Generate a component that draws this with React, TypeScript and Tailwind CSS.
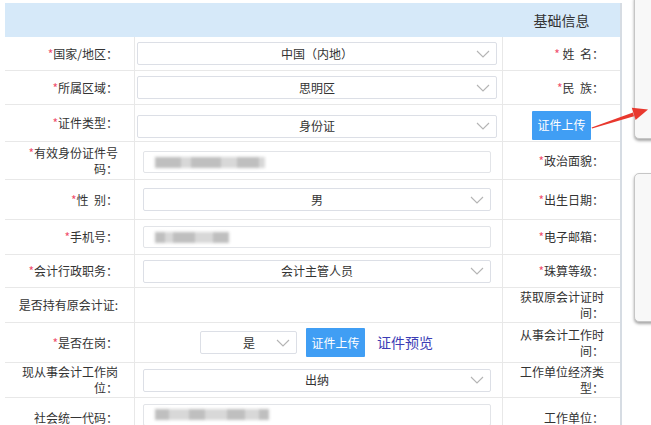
import React from "react";

const Chevron = () => (
  <svg width="14" height="8" viewBox="0 0 14 8" className="absolute right-[6px] top-1/2 -translate-y-1/2">
    <polyline points="1,1 7,7 13,1" fill="none" stroke="#b4b4b4" strokeWidth="1.1" />
  </svg>
);

const Req = () => <span className="text-[#f0506e]">*</span>;

const Select = ({ value, cls }: { value: string; cls: string }) => (
  <div className={`relative h-[23px] border border-[#dcdfe6] rounded-[2px] bg-white flex items-center justify-center text-[12px] text-[#333] ${cls}`}>
    <span>{value}</span>
    <Chevron />
  </div>
);

const Blur = ({ widths }: { widths: number[] }) => (
  <div className="flex items-center h-full pl-[11px] blur-[1.5px]">
    {widths.map((w, i) => (
      <div key={i} style={{ width: w, opacity: i % 2 ? 0.55 : 0.9 }} className="h-[11px] bg-[#b8b8b8]" />
    ))}
  </div>
);

const Input = ({ widths }: { widths?: number[] }) => (
  <div className="h-[22px] border border-[#e2e4e8] rounded-[2px] bg-white ml-[8px] mr-[11px]">
    {widths && <Blur widths={widths} />}
  </div>
);

const Btn = () => (
  <div className="w-[59px] h-[29px] bg-[#409ef4] text-white text-[12px] flex items-center justify-center rounded-[1px]">证件上传</div>
);

type RowProps = { h: string; left: React.ReactNode; mid?: React.ReactNode; right: React.ReactNode; rightNode?: boolean };

const Row = ({ h, left, mid, right, rightNode }: RowProps) => (
  <div className={`grid grid-cols-[130px_368px_117px] border-b border-[#e8e8e8] ${h}`}>
    <div className="flex items-center justify-end text-right pl-[12px] pr-[16px] border-r border-[#e8e8e8] text-[12px] leading-[16px] text-[#333]">
      <div>{left}</div>
    </div>
    <div className="flex flex-col justify-center border-r border-[#e8e8e8]">{mid}</div>
    {rightNode ? (
      <div className="flex items-center justify-center">{right}</div>
    ) : (
      <div className="flex items-center justify-end text-right pl-[17px] pr-[16px] text-[12px] leading-[16px] text-[#333]">
        <div>{right}</div>
      </div>
    )}
  </div>
);

export default function App() {
  return (
    <div
      className="relative w-[651px] h-[425px] overflow-hidden bg-white flex"
      style={{ fontFamily: '"Noto Sans CJK SC", "Noto Sans", sans-serif' }}
    >
      <div className="pl-[5px] pt-[3px] shrink-0">
        <div className="w-[617px] border-r-2 border-[#d6dce3]">
          <div className="h-[34px] bg-[#d6e9f9] flex">
            <div className="w-[498px]" />
            <div className="w-[117px] flex items-center justify-center text-[14px] text-[#333]">基础信息</div>
          </div>
          <Row h="h-[34px]" left={<><Req />国家/地区：</>} mid={<Select value="中国（内地）" cls="ml-[2px] mr-[5px]" />} right={<><Req /> 姓&nbsp;&nbsp;名：</>} />
          <Row h="h-[34px]" left={<><Req />所属区域：</>} mid={<Select value="思明区" cls="ml-[2px] mr-[5px]" />} right={<><Req />民&nbsp;&nbsp;族：</>} />
          <Row
            h="h-[37px]"
            left={<><Req />证件类型：</>}
            mid={<div className="pt-[6px]"><Select value="身份证" cls="ml-[2px] mr-[5px]" /></div>}
            right={<div className="pt-[4px]"><Btn /></div>}
            rightNode
          />
          <Row
            h="h-[38px]"
            left={<><Req />有效身份证件号码：</>}
            mid={<div className="pt-[3px]"><Input widths={[26, 10, 30, 16, 22, 6]} /></div>}
            right={<><Req />政治面貌：</>}
          />
          <Row h="h-[40px]" left={<><Req />性&nbsp;&nbsp;别：</>} mid={<Select value="男" cls="ml-[8px] mr-[11px]" />} right={<><Req />出生日期：</>} />
          <Row h="h-[35px]" left={<><Req />手机号：</>} mid={<Input widths={[10, 8, 22, 18, 16]} />} right={<><Req />电子邮箱：</>} />
          <Row h="h-[33px]" left={<><Req />会计行政职务：</>} mid={<Select value="会计主管人员" cls="ml-[8px] mr-[11px]" />} right={<><Req />珠算等级：</>} />
          <Row h="h-[35px]" left={<>是否持有原会计证:</>} mid={null} right={<>获取原会计证时间：</>} />
          <Row
            h="h-[40px]"
            left={<><Req />是否在岗：</>}
            mid={
              <div className="flex items-center pl-[65px]">
                <div className="relative w-[97px] h-[23px] border border-[#dcdfe6] rounded-[2px] flex items-center text-[12px] text-[#333]">
                  <span className="ml-[42px]">是</span>
                  <Chevron />
                </div>
                <div className="ml-[9px]"><Btn /></div>
                <span className="ml-[12px] text-[14px] text-[#3c3cb5]">证件预览</span>
              </div>
            }
            right={<>从事会计工作时间：</>}
          />
          <Row h="h-[35px]" left={<>现从事会计工作岗位：</>} mid={<Select value="出纳" cls="ml-[8px] mr-[11px]" />} right={<>工作单位经济类型：</>} />
          <Row h="h-[40px]" left={<>社会统一代码：</>} mid={<div className="pb-[6px]"><Input widths={[14, 20, 16, 22, 18, 14, 10]} /></div>} right={<>工作单位：</>} />
        </div>
      </div>
      <div className="flex-1 flex flex-col pl-[12px] gap-[34px] overflow-hidden">
        <div className="w-[40px] h-[145px] -mt-[6px] shrink-0 rounded-[5px] border border-[#c6c6c6] bg-[#f8f8f8] shadow-[0_2px_3px_rgba(0,0,0,0.35)]" />
        <div className="w-[40px] h-[149px] shrink-0 rounded-[5px] border border-[#c6c6c6] bg-[#f8f8f8] shadow-[0_2px_3px_rgba(0,0,0,0.35)]" />
      </div>
      <svg className="absolute left-0 top-0 pointer-events-none" width="651" height="425">
        <polygon points="592,128.5 634,116.2 633,112.6 591.6,127.5" fill="#e8382e" />
        <polygon points="648,109.5 631.8,107.8 635.6,120" fill="#e8382e" />
      </svg>
    </div>
  );
}
